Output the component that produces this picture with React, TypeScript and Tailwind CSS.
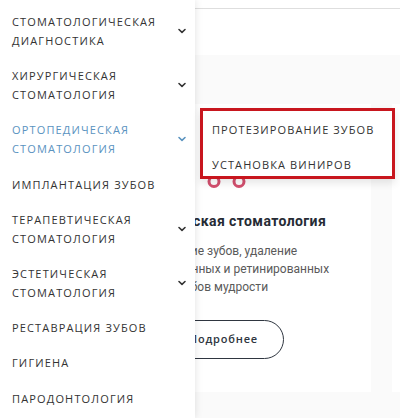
import React from "react"

type Item = { lines: string[]; sub?: boolean; active?: boolean }

const items: Item[] = [
  { lines: ["СТОМАТОЛОГИЧЕСКАЯ", "ДИАГНОСТИКА"], sub: true },
  { lines: ["ХИРУРГИЧЕСКАЯ", "СТОМАТОЛОГИЯ"], sub: true },
  { lines: ["ОРТОПЕДИЧЕСКАЯ", "СТОМАТОЛОГИЯ"], sub: true, active: true },
  { lines: ["ИМПЛАНТАЦИЯ ЗУБОВ"] },
  { lines: ["ТЕРАПЕВТИЧЕСКАЯ", "СТОМАТОЛОГИЯ"], sub: true },
  { lines: ["ЭСТЕТИЧЕСКАЯ", "СТОМАТОЛОГИЯ"], sub: true },
  { lines: ["РЕСТАВРАЦИЯ ЗУБОВ"] },
  { lines: ["ГИГИЕНА"] },
  { lines: ["ПАРОДОНТОЛОГИЯ"] },
]

function Chevron() {
  return (
    <svg width="10" height="6" viewBox="0 0 10 6">
      <path d="M2 1.5 L5 4.3 L8 1.5" fill="none" stroke="currentColor" strokeWidth="1.6" strokeLinecap="round" strokeLinejoin="round" />
    </svg>
  )
}

export default function App() {
  return (
    <div className="relative w-[400px] h-[418px] overflow-hidden bg-white font-['Open_Sans',sans-serif]">
      {/* page behind the menu */}
      <div className="h-[8px]" />
      <div className="h-[47px] border-t border-[#dedede] bg-white" />
      <section className="h-[363px] bg-[#fafafa] pt-[49px]">
        <div className="flex gap-[21px] pl-[76px]">
          <div className="w-[295px] h-[288px] shrink-0 bg-white pt-[46px] flex flex-col items-center text-center font-['Roboto',sans-serif]">
            <svg width="52" height="40" viewBox="0 0 52 40" className="block">
              <circle cx="16" cy="31.5" r="5" fill="none" stroke="#d4506f" strokeWidth="3" />
              <circle cx="41" cy="31.5" r="5" fill="none" stroke="#d4506f" strokeWidth="3" />
            </svg>
            <h3 className="mt-[21px] text-[14px] leading-[20px] font-bold tracking-[0.4px] text-[#262b35] whitespace-nowrap">
              Хирургическая стоматология
            </h3>
            <p className="mt-[11px] text-[12px] leading-[18px] text-[#5a5a5a] whitespace-nowrap">
              Удаление зубов, удаление
              <br />
              дистопированных и ретинированных
              <br />
              зубов мудрости
            </p>
            <button className="mt-[24px] h-[39px] px-[25px] rounded-full border border-[#2f3640] font-['Open_Sans',sans-serif] text-[11px] font-semibold tracking-[0.8px] text-[#2f3640]">
              Подробнее
            </button>
          </div>
          <div className="w-[200px] h-[288px] shrink-0 bg-white" />
        </div>
      </section>

      {/* dropdown menu */}
      <nav className="absolute left-0 top-0 w-[195px] bg-white pt-[4px] pb-[2px] shadow-[0_0_8px_rgba(0,0,0,0.12)]">
        {items.map((item, i) => (
          <div
            key={i}
            className={`flex items-center justify-between pl-[12px] pr-[8px] py-[8.1px] ${item.active ? "text-[#5a93bf]" : "text-[#333]"}`}
          >
            <div className="text-[11px] leading-[19px] tracking-[1.15px]">
              {item.lines.map((l, j) => (
                <div key={j}>{l}</div>
              ))}
            </div>
            {item.sub && <Chevron />}
          </div>
        ))}
      </nav>

      {/* opened submenu */}
      <div className="absolute left-[200px] top-[108px] w-[195px] h-[71px] bg-white border-[3px] border-[#c8161e] shadow-[0_4px_8px_rgba(0,0,0,0.1)] pl-[9px] pt-[9px] flex flex-col gap-[15px] text-[11px] leading-[20px] tracking-[1.1px] text-[#333]">
        <div>ПРОТЕЗИРОВАНИЕ ЗУБОВ</div>
        <div>УСТАНОВКА ВИНИРОВ</div>
      </div>
    </div>
  )
}
